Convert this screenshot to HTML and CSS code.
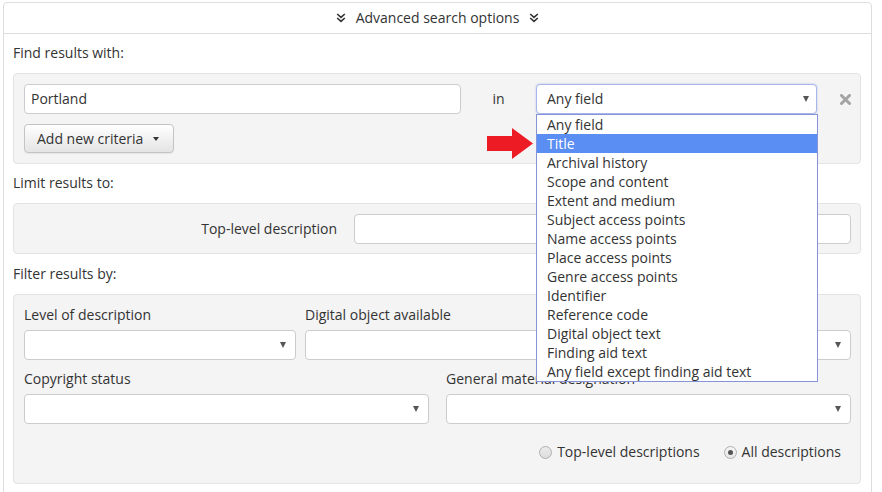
FILE: index.html
```html
<!DOCTYPE html>
<html lang="en">
<head>
<meta charset="utf-8">
<title>Advanced search options</title>
<link rel="stylesheet" href="styles.css">
</head>
<body>
<div class="panel">
  <div class="panel-head">
    <svg class="chev" width="10" height="10" viewBox="0 0 10 10"><polyline points="1.2,1 5,4.4 8.8,1"/><polyline points="1.2,5 5,8.4 8.8,5"/></svg>
    <span>Advanced search options</span>
    <svg class="chev" width="10" height="10" viewBox="0 0 10 10"><polyline points="1.2,1 5,4.4 8.8,1"/><polyline points="1.2,5 5,8.4 8.8,5"/></svg>
  </div>
  <div class="panel-body">
    <div class="section-label">Find results with:</div>
    <div class="well well-criteria">
      <div class="criteria-row">
        <div class="input">Portland</div>
        <div class="in-label">in</div>
        <div class="select-wrap">
          <div class="select select-focus"><span>Any field</span><span class="sel-caret"></span></div>
          <ul class="dropdown">
            <li>Any field</li>
            <li class="active">Title</li>
            <li>Archival history</li>
            <li>Scope and content</li>
            <li>Extent and medium</li>
            <li>Subject access points</li>
            <li>Name access points</li>
            <li>Place access points</li>
            <li>Genre access points</li>
            <li>Identifier</li>
            <li>Reference code</li>
            <li>Digital object text</li>
            <li>Finding aid text</li>
            <li>Any field except finding aid text</li>
          </ul>
          <svg class="red-arrow" width="47" height="32" viewBox="0 0 47 32"><polygon points="0,8 25,8 25,0 46,15.5 25,31 25,23 0,23"/></svg>
        </div>
        <div class="remove">
          <svg width="11" height="11" viewBox="0 0 11 11"><path d="M1.5 1.5 L9.5 9.5 M9.5 1.5 L1.5 9.5"/></svg>
        </div>
      </div>
      <button class="btn">Add new criteria <span class="caret"></span></button>
    </div>

    <div class="section-label">Limit results to:</div>
    <div class="well well-limit">
      <div class="limit-row">
        <div class="limit-label">Top-level description</div>
        <div class="input grow"></div>
      </div>
    </div>

    <div class="section-label">Filter results by:</div>
    <div class="well well-filter">
      <div class="grid3">
        <div class="field">
          <div class="field-label">Level of description</div>
          <div class="select"><span></span><span class="sel-caret"></span></div>
        </div>
        <div class="field">
          <div class="field-label">Digital object available</div>
          <div class="select"><span></span><span class="sel-caret"></span></div>
        </div>
        <div class="field">
          <div class="field-label">&nbsp;</div>
          <div class="select"><span></span><span class="sel-caret"></span></div>
        </div>
      </div>
      <div class="grid2">
        <div class="field">
          <div class="field-label">Copyright status</div>
          <div class="select"><span></span><span class="sel-caret"></span></div>
        </div>
        <div class="field">
          <div class="field-label">General material designation</div>
          <div class="select"><span></span><span class="sel-caret"></span></div>
        </div>
      </div>
      <div class="radio-row">
        <label class="radio-item"><span class="radio"></span>Top-level descriptions</label>
        <label class="radio-item"><span class="radio checked"></span>All descriptions</label>
      </div>
    </div>
  </div>
</div>
</body>
</html>
```

FILE: styles.css
```css
* { box-sizing: border-box; }

body {
  margin: 0;
  padding: 2px 10px 0 3px;
  font-family: "Open Sans", "Liberation Sans", sans-serif;
  font-size: 14px;
  color: #333;
  background: #fff;
}

.panel {
  border: 1px solid #ddd;
  border-radius: 4px;
  min-height: 520px;
}

.panel-head {
  height: 31px;
  border-bottom: 1px solid #ddd;
  display: flex;
  align-items: center;
  justify-content: center;
  gap: 10px;
  line-height: 20px;
}

.chev {
  fill: none;
  stroke: #333;
  stroke-width: 1.6;
}

.panel-body {
  padding: 9px 10px 20px 9px;
}

.section-label {
  line-height: 20px;
  margin-bottom: 10px;
}

.well {
  background: #f4f4f4;
  border: 1px solid #e3e3e3;
  border-radius: 4px;
  padding: 10px 9px 10px 10px;
  margin-bottom: 10px;
}

.well-criteria {
  margin-bottom: 9px;
}

.well-limit {
  padding-bottom: 9px;
}

.input {
  height: 30px;
  border: 1px solid #ccc;
  border-radius: 4px;
  background: #fff;
  padding: 0 6px;
  display: flex;
  align-items: center;
  line-height: 20px;
}

.grow { flex: 1; }

.criteria-row {
  display: grid;
  grid-template-columns: 437px 1fr 281px 34px;
  align-items: center;
}

.in-label {
  text-align: center;
  line-height: 20px;
}

.select-wrap {
  position: relative;
}

.select {
  height: 30px;
  border: 1px solid #ccc;
  border-radius: 4px;
  background: #fff;
  padding: 0 9px 0 10px;
  display: flex;
  align-items: center;
  justify-content: space-between;
  line-height: 20px;
}

.select-focus {
  border-color: #a9b6ea;
  box-shadow: 0 0 2px rgba(120, 140, 230, 0.5);
  padding-right: 7px;
}

.sel-caret {
  width: 0;
  height: 0;
  border-top: 6px solid #555;
  border-left: 3.5px solid transparent;
  border-right: 3.5px solid transparent;
}

.dropdown {
  position: absolute;
  top: 30px;
  left: 0;
  width: 282px;
  margin: 0;
  padding: 0;
  list-style: none;
  background: #fff;
  border: 1px solid #8593d8;
  z-index: 5;
}

.dropdown li {
  height: 19px;
  line-height: 19px;
  padding-left: 10px;
  white-space: nowrap;
}

.dropdown li.active {
  background: #5b8ef2;
  color: #fff;
}

.red-arrow {
  position: absolute;
  left: -49px;
  top: 44px;
  z-index: 6;
  fill: #ed1c24;
}

.remove {
  justify-self: end;
  display: flex;
  align-items: center;
}

.remove svg {
  stroke: #a3a3a3;
  stroke-width: 3;
  stroke-linecap: round;
}

.btn {
  margin-top: 10px;
  height: 29px;
  display: inline-flex;
  align-items: center;
  gap: 10px;
  padding: 0 14px 0 12px;
  font: inherit;
  color: #333;
  background: linear-gradient(#ffffff, #e4e4e4);
  border: 1px solid #c4c4c4;
  border-radius: 4px;
  box-shadow: 0 1px 1px rgba(0, 0, 0, 0.06);
}

.caret {
  width: 0;
  height: 0;
  border-top: 4px solid #333;
  border-left: 3.5px solid transparent;
  border-right: 3.5px solid transparent;
}

.limit-row {
  display: flex;
  align-items: center;
}

.limit-label {
  width: 313px;
  text-align: right;
  margin-right: 17px;
  line-height: 20px;
}

.well-filter {
  padding-bottom: 21px;
}

.grid3 {
  display: grid;
  grid-template-columns: 272px 272px 1fr;
  column-gap: 9px;
}

.grid2 {
  display: grid;
  grid-template-columns: 1fr 1fr;
  column-gap: 17px;
  margin-top: 9px;
}

.field-label {
  line-height: 20px;
  margin-bottom: 5px;
  white-space: nowrap;
}

.radio-row {
  display: flex;
  justify-content: flex-end;
  gap: 24px;
  margin-top: 18px;
  padding-right: 10px;
  line-height: 20px;
}

.radio-item {
  display: flex;
  align-items: center;
  gap: 5px;
}

.radio {
  width: 13px;
  height: 13px;
  border-radius: 50%;
  border: 1px solid #b0b0b0;
  background: linear-gradient(#ececec, #dcdcdc);
  display: flex;
  align-items: center;
  justify-content: center;
}

.radio.checked {
  background: linear-gradient(#f6f6f6, #e6e6e6);
}

.radio.checked::after {
  content: "";
  width: 5px;
  height: 5px;
  border-radius: 50%;
  background: #555;
}
```
